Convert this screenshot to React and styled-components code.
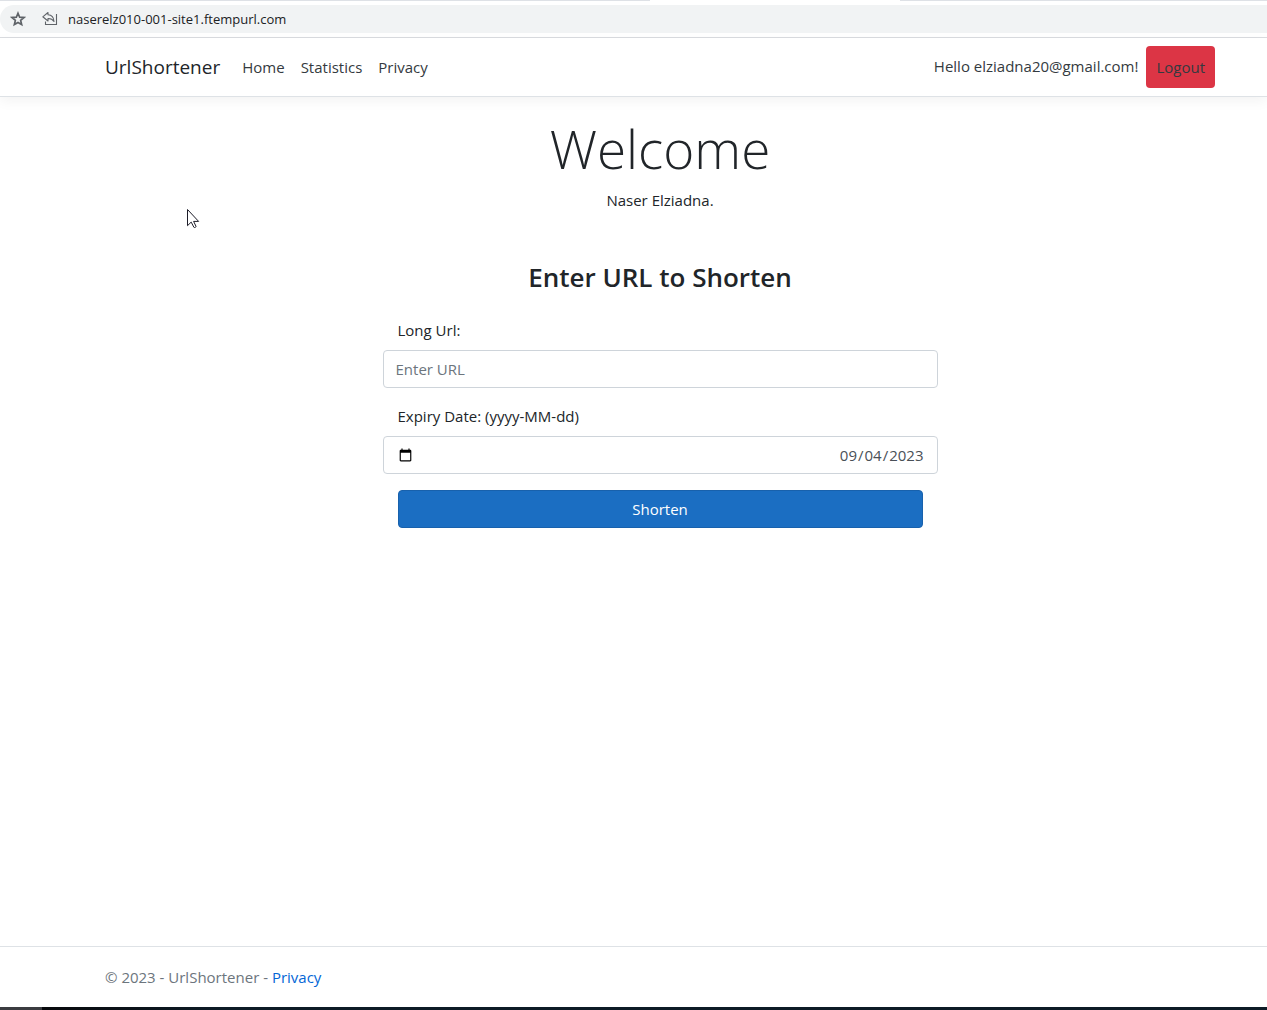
import React, { useState } from "react";
import styled, { createGlobalStyle } from "styled-components";

const GlobalStyle = createGlobalStyle`
  *, *::before, *::after { box-sizing: border-box; }
  body {
    margin: 0;
    background: #fff;
    color: #212529;
    font-family: "Open Sans", "Noto Sans", sans-serif;
    font-size: 15px;
    line-height: 24px;
  }
  h1, h2, p { margin: 0; }
  a { text-decoration: none; }
`;

const Page = styled.div`
  display: flex;
  flex-direction: column;
  min-height: 100vh;
`;

const BrowserBar = styled.div`
  display: flex;
  flex-direction: column;
  gap: 4px;
  height: 38px;
  border-bottom: 1px solid #dadce0;
`;

const TabEdge = styled.div`
  display: grid;
  grid-template-columns: 650px 250px 1fr;
`;

const TabSegment = styled.span`
  height: 1px;
  background: ${(p) => (p.$active ? "#fff" : "#dee1e6")};
`;

const AddressBar = styled.div`
  display: flex;
  align-items: center;
  gap: 10px;
  height: 28px;
  padding: 0 10px;
  border-radius: 14px 0 0 14px;
  background: #f1f3f4;
`;

const BarButton = styled.button`
  display: flex;
  padding: 0;
  margin-right: ${(p) => (p.$wide ? "6px" : "0")};
  border: 0;
  background: none;
  color: #5f6368;
`;

const Address = styled.span`
  color: #202124;
  font-size: 13px;
  line-height: 20px;
`;

const Container = styled.div`
  display: flex;
  align-items: center;
  padding: 0 52px 0 105px;
`;

const Header = styled.header`
  padding: 8px 0;
  border-bottom: 1px solid #dee2e6;
  box-shadow: 0 4px 12px rgba(0, 0, 0, 0.05);
`;

const Brand = styled.a`
  margin-right: 14px;
  color: #212529;
  font-size: 19px;
`;

const Nav = styled.nav`
  display: flex;
  flex: 1;
`;

const NavLink = styled.a`
  padding: 8px;
  color: #343a40;
`;

const Greeting = styled.a`
  padding: 0 8px 2px;
  color: #343a40;
`;

const LogoutButton = styled.button`
  height: 42px;
  padding: 0 10px;
  border: 0;
  border-radius: 4px;
  background: #dc3545;
  color: #343a40;
  font: inherit;
`;

const Main = styled.main`
  display: flex;
  flex: 1;
  flex-direction: column;
  align-items: center;
  padding: 18px 52px 16px 105px;
`;

const Title = styled.h1`
  margin-bottom: 6px;
  font-size: 53px;
  font-weight: 300;
  line-height: 67px;
`;

const Subtitle = styled.h2`
  margin: 48px 0 24px;
  font-size: 26px;
  font-weight: 600;
  line-height: 34px;
`;

const Form = styled.form`
  display: flex;
  flex-direction: column;
  gap: 16px;
  width: 50%;
`;

const Field = styled.div`
  display: flex;
  flex-direction: column;
  gap: 8px;
`;

const Label = styled.label`
  padding: 0 15px;
`;

const Input = styled.input`
  width: 100%;
  height: 38px;
  padding: 6px 12px;
  border: 1px solid #ced4da;
  border-radius: 4px;
  background: #fff;
  color: #495057;
  font: inherit;

  &::placeholder {
    color: #6c757d;
    opacity: 1;
  }

  &::-webkit-calendar-picker-indicator {
    order: -1;
    margin: 0;
  }

  &::-webkit-datetime-edit {
    text-align: right;
  }
`;

const SubmitButton = styled.button`
  height: 38px;
  margin: 0 15px;
  border: 1px solid #1861ac;
  border-radius: 4px;
  background: #1b6ec2;
  color: #fff;
  font: inherit;
`;

const Footer = styled.footer`
  border-top: 1px solid #dee2e6;
  color: #6c757d;
  line-height: 60px;
`;

const FooterLink = styled.a`
  color: #0366d6;
`;

const TaskbarEdge = styled.div`
  height: 3px;
  background: linear-gradient(90deg, #3b3c40 0 42px, #08090c 42px, #0d1b26 220px, #0d1b26);
`;

const Cursor = styled.svg`
  position: absolute;
  top: 208px;
  left: 186px;
  pointer-events: none;
`;

function StarIcon() {
  return (
    <svg width="16" height="16" viewBox="0 0 16 16" fill="none" stroke="currentColor" strokeWidth="1.7">
      <path d="M8 2.2l1.65 4 4.3.35-3.3 2.85 1 4.2L8 11.4l-3.65 2.2 1-4.2-3.3-2.85 4.3-.35z" />
    </svg>
  );
}

function ReplyIcon() {
  return (
    <svg width="16" height="16" viewBox="0 0 16 16" fill="none" stroke="currentColor" strokeWidth="1.1">
      <path d="M6 1.5L.8 5.8 6 10V7.5c3-.1 4.6.8 6 3-.2-3.8-2-6.4-6-6.7z" strokeLinejoin="round" />
      <path d="M14.5 3v10.5h-11v-3" />
    </svg>
  );
}

export default function App() {
  const [url, setUrl] = useState("");
  const [expiry, setExpiry] = useState("2023-09-04");

  return (
    <Page>
      <GlobalStyle />
      <BrowserBar>
        <TabEdge>
          <TabSegment />
          <TabSegment $active />
          <TabSegment />
        </TabEdge>
        <AddressBar>
          <BarButton type="button" aria-label="Bookmark" $wide>
            <StarIcon />
          </BarButton>
          <BarButton type="button" aria-label="Share">
            <ReplyIcon />
          </BarButton>
          <Address>naserelz010-001-site1.ftempurl.com</Address>
        </AddressBar>
      </BrowserBar>

      <Header>
        <Container>
          <Brand href="#">UrlShortener</Brand>
          <Nav>
            <NavLink href="#">Home</NavLink>
            <NavLink href="#">Statistics</NavLink>
            <NavLink href="#">Privacy</NavLink>
          </Nav>
          <Greeting href="#">Hello elziadna20@gmail.com!</Greeting>
          <LogoutButton type="button">Logout</LogoutButton>
        </Container>
      </Header>

      <Main>
        <Title>Welcome</Title>
        <p>Naser Elziadna.</p>
        <Subtitle>Enter URL to Shorten</Subtitle>
        <Form onSubmit={(e) => e.preventDefault()}>
          <Field>
            <Label htmlFor="long-url">Long Url:</Label>
            <Input
              id="long-url"
              type="text"
              placeholder="Enter URL"
              value={url}
              onChange={(e) => setUrl(e.target.value)}
            />
          </Field>
          <Field>
            <Label htmlFor="expiry">Expiry Date: (yyyy-MM-dd)</Label>
            <Input
              id="expiry"
              type="date"
              value={expiry}
              onChange={(e) => setExpiry(e.target.value)}
            />
          </Field>
          <SubmitButton type="submit">Shorten</SubmitButton>
        </Form>
      </Main>

      <Footer>
        <Container>
          <p>
            © 2023 - UrlShortener - <FooterLink href="#">Privacy</FooterLink>
          </p>
        </Container>
      </Footer>
      <TaskbarEdge />

      <Cursor width="14" height="21" viewBox="0 0 14 21" aria-hidden="true">
        <path
          d="M1.5 1.5v16.2l3.7-3.6 2.7 5.2c.8.6 2.2 0 2.1-1l-2.4-4.9h5z"
          fill="#fff"
          stroke="#1c1c28"
          strokeWidth="1"
        />
      </Cursor>
    </Page>
  );
}
